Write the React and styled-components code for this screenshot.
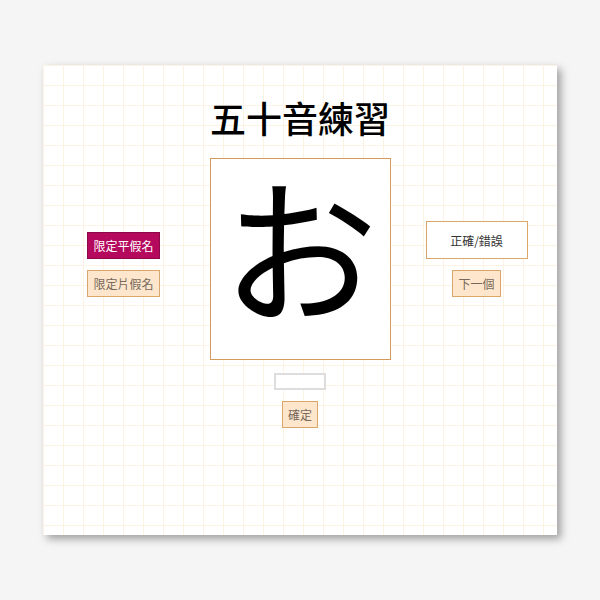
import styled, { createGlobalStyle } from 'styled-components'

const GlobalStyle = createGlobalStyle`
  html, body {
    margin: 0;
    padding: 0;
    background: #f5f5f5;
    font-family: "Noto Sans CJK TC", "Noto Sans", sans-serif;
  }
`

const Page = styled.div`
  width: 600px;
  height: 600px;
  display: flex;
  justify-content: center;
  padding-top: 65px;
  box-sizing: border-box;
`

const Card = styled.div`
  width: 514px;
  height: 470px;
  background-color: #fff;
  background-image:
    linear-gradient(to right, #fdf3e4 1px, transparent 1px),
    linear-gradient(to bottom, #fdf3e4 1px, transparent 1px);
  background-size: 20px 20px;
  box-shadow: 4px 4px 8px rgba(0, 0, 0, 0.35);
  display: flex;
  flex-direction: column;
  align-items: center;
`

const Title = styled.h1`
  margin: 32px 0 0;
  font-size: 36px;
  font-weight: 500;
  line-height: 40px;
  color: #000;
`

const Board = styled.div`
  margin-top: 21px;
  display: grid;
  grid-template-columns: 140px 181px 140px;
  column-gap: 16px;
  align-items: center;
`

const Side = styled.div`
  display: flex;
  flex-direction: column;
  align-items: center;
  gap: 11px;
  margin-top: ${(p) => p.$offset || 0}px;
`

const KanaBox = styled.div`
  height: 202px;
  box-sizing: border-box;
  border: 1px solid #d29a5c;
  background: #fff;
  display: flex;
  align-items: flex-start;
  justify-content: center;
  font-size: 156px;
  line-height: 168px;
  color: #000;
`

const Button = styled.button`
  font-family: inherit;
  font-size: 12px;
  line-height: 17px;
  padding: 4px 5px;
  border: 1px solid ${(p) => (p.$active ? '#8c0848' : '#dba66a')};
  background: ${(p) => (p.$active ? '#b5095e' : '#fde6cb')};
  color: ${(p) => (p.$active ? '#fff' : '#76685c')};
  cursor: pointer;
`

const Result = styled.div`
  width: 102px;
  height: 38px;
  box-sizing: border-box;
  border: 1px solid #dba66a;
  background: #fff;
  display: flex;
  align-items: center;
  justify-content: center;
  font-size: 12px;
  color: #333;
`

const Answer = styled.input`
  margin-top: 13px;
  width: 48px;
  height: 13px;
  padding: 0;
  border: 2px solid #ddd;
  background: #fff;
  outline: none;
`

const Submit = styled(Button)`
  margin-top: 11px;
`

const App = () => {
  return (
    <Page>
      <GlobalStyle />
      <Card>
        <Title>五十音練習</Title>
        <Board>
          <Side $offset={11}>
            <Button $active>限定平假名</Button>
            <Button>限定片假名</Button>
          </Side>
          <KanaBox>お</KanaBox>
          <Side>
            <Result>正確/錯誤</Result>
            <Button>下一個</Button>
          </Side>
        </Board>
        <Answer type="text" />
        <Submit>確定</Submit>
      </Card>
    </Page>
  )
}

export default App
